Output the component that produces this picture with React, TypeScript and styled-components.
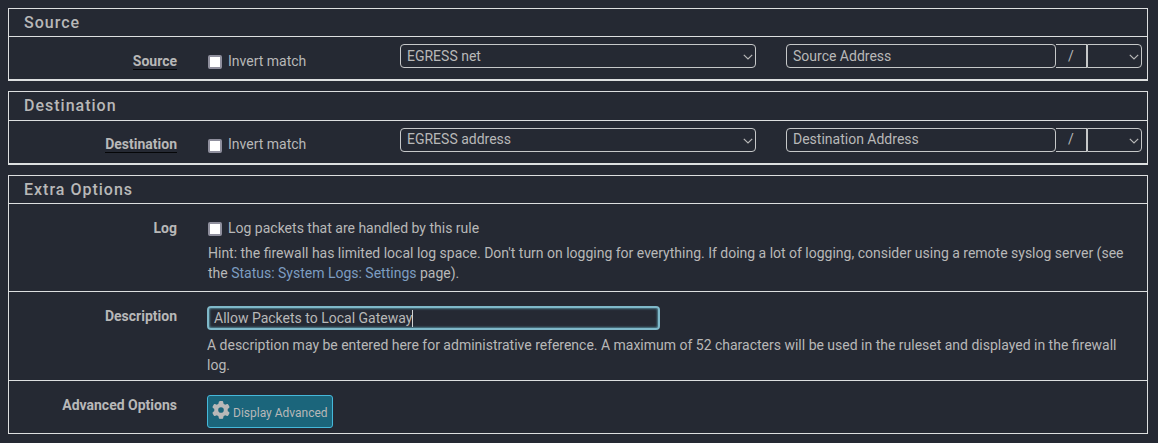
import React from 'react';
import styled, { createGlobalStyle } from 'styled-components';
import { FaGear } from 'react-icons/fa6';

const line = '#dddfe0';
const text = '#b8b8b8';

const GlobalStyle = createGlobalStyle`
  * { box-sizing: border-box; }
  body {
    margin: 0;
    background: #252933;
    color: ${text};
    font: 14px/20px Roboto, sans-serif;
  }
  input, button { font: inherit; color: inherit; }
`;

const Page = styled.main`
  display: flex;
  flex-direction: column;
  gap: 10px;
  width: 1158px;
  height: 443px;
  padding: 8px 10px 9px 8px;
`;

const Panel = styled.section<{ $thick?: boolean }>`
  border: 1px solid ${line};
  border-bottom-width: ${(p) => (p.$thick ? 2 : 1)}px;
`;

const Title = styled.h2<{ $height?: number }>`
  height: ${(p) => p.$height ?? 27}px;
  margin: 0;
  padding-left: 15px;
  font-size: 16px;
  font-weight: 500;
  line-height: 27px;
  letter-spacing: 1px;
`;

const Row = styled.div<{ $height: number }>`
  display: flex;
  align-items: flex-start;
  height: ${(p) => p.$height}px;
  border-top: 1px solid ${line};
`;

const Label = styled.div<{ $top: number }>`
  width: 168px;
  margin-right: 30px;
  padding-top: ${(p) => p.$top}px;
  text-align: right;
  font-weight: 700;
`;

const Underlined = styled.span`
  display: inline-block;
  height: 19px;
  border-bottom: 1px solid #050608;
`;

const CheckLabel = styled.label<{ $top: number; $width?: number }>`
  display: flex;
  width: ${(p) => (p.$width ? `${p.$width}px` : 'auto')};
  padding: ${(p) => p.$top}px 0 0 1px;
  gap: 6px;
`;

const Checkbox = styled.input<{ $top: number }>`
  appearance: none;
  width: 14px;
  height: 14px;
  margin: ${(p) => p.$top}px 0 0;
  border: 2px solid #8f8f9d;
  border-radius: 2px;
  background: #fff;
`;

const Select = styled.div<{ $width: number; $shift: number; $joined?: boolean }>`
  display: flex;
  justify-content: space-between;
  width: ${(p) => p.$width}px;
  height: 24px;
  padding: 0 2px 0 6px;
  border: 1px solid #c6c8c9;
  border-radius: ${(p) => (p.$joined ? '0 4px 4px 0' : '4px')};
  line-height: ${(p) => 22 + p.$shift}px;
`;

const Chevron = styled.svg`
  width: 10px;
  height: 8px;
  margin-top: 8px;
  fill: none;
  stroke: ${text};
  stroke-width: 1.2;
`;

const Controls = styled.div`
  display: flex;
  padding-top: 7px;
`;

const AddressGroup = styled.div`
  display: flex;
  margin-left: 30px;
`;

const Address = styled.input<{ $shift: number }>`
  width: 270px;
  height: 24px;
  padding: 0 6px ${(p) => p.$shift}px;
  border: 1px solid #c6c8c9;
  border-radius: 4px;
  background: transparent;
  outline: none;
  &::placeholder { color: ${text}; opacity: 1; }
`;

const Slash = styled.span<{ $shift: number }>`
  width: 31px;
  height: 24px;
  border: 1px solid #c6c8c9;
  border-left: 0;
  text-align: center;
  line-height: ${(p) => 22 + p.$shift}px;
`;

const Body = styled.div`
  flex: 1;
`;

const Help = styled.p<{ $top: number; $left?: number }>`
  width: 930px;
  margin: ${(p) => p.$top}px 0 0 ${(p) => p.$left ?? 0}px;
  word-spacing: -0.03px;
`;

const Link = styled.a`
  color: #7d9dc1;
`;

const DescriptionField = styled.div`
  display: flex;
  align-items: center;
  width: 453px;
  height: 24px;
  margin-top: 14px;
  padding-left: 5px;
  border: 2px solid #7fb8c9;
  border-radius: 4px;
  box-shadow: inset 0 0 2px 1px #4f7f8e;
`;

const Caret = styled.span`
  width: 1px;
  height: 17px;
  background: #d0d2d3;
`;

const AdvancedButton = styled.button`
  display: flex;
  width: 126px;
  height: 33px;
  margin-top: 14px;
  padding: 0 0 0 4px;
  gap: 3px;
  border: 1px solid #46b8da;
  border-radius: 3px;
  background: #1b657b;
  font-size: 12px;
  line-height: 34px;
  white-space: nowrap;
`;

const Gear = styled(FaGear)`
  width: 18px;
  height: 18px;
  margin-top: 5px;
  flex: none;
`;

function Arrow() {
  return (
    <Chevron viewBox="0 0 10 8">
      <path d="M0.8 1.8 L5 6 L9.2 1.8" />
    </Chevron>
  );
}

interface EndpointProps {
  name: string;
  network: string;
  titleHeight: number;
  labelTop: number;
  checkTop: number;
  shift: number;
}

function Endpoint({ name, network, titleHeight, labelTop, checkTop, shift }: EndpointProps) {
  return (
    <Panel $thick>
      <Title $height={titleHeight}>{name}</Title>
      <Row $height={43}>
        <Label $top={labelTop}><Underlined>{name}</Underlined></Label>
        <CheckLabel $top={labelTop} $width={193}>
          <Checkbox type="checkbox" $top={checkTop} />
          Invert match
        </CheckLabel>
        <Controls>
          <Select $width={356} $shift={shift}>{network}<Arrow /></Select>
          <AddressGroup>
            <Address placeholder={`${name} Address`} $shift={-shift} />
            <Slash $shift={shift}>/</Slash>
            <Select $width={55} $shift={shift} $joined><span /><Arrow /></Select>
          </AddressGroup>
        </Controls>
      </Row>
    </Panel>
  );
}

export default function App() {
  return (
    <Page>
      <GlobalStyle />
      <Endpoint name="Source" network="EGRESS net" titleHeight={27} labelTop={14} checkTop={4} shift={0} />
      <Endpoint name="Destination" network="EGRESS address" titleHeight={28} labelTop={13} checkTop={5} shift={-2} />
      <Panel>
        <Title>Extra Options</Title>
        <Row $height={88}>
          <Label $top={14}>Log</Label>
          <Body>
            <CheckLabel $top={14}>
              <Checkbox type="checkbox" $top={4} />
              Log packets that are handled by this rule
            </CheckLabel>
            <Help $top={5} $left={1}>
              Hint: the firewall has limited local log space. Don't turn on logging for everything. If doing a lot of logging, consider using a remote syslog server (see the <Link>Status: System Logs: Settings</Link> page).
            </Help>
          </Body>
        </Row>
        <Row $height={89}>
          <Label $top={14}>Description</Label>
          <Body>
            <DescriptionField>Allow Packets to Local Gateway<Caret /></DescriptionField>
            <Help $top={5}>
              A description may be entered here for administrative reference. A maximum of 52 characters will be used in the ruleset and displayed in the firewall log.
            </Help>
          </Body>
        </Row>
        <Row $height={53}>
          <Label $top={14}>Advanced Options</Label>
          <AdvancedButton><Gear />Display Advanced</AdvancedButton>
        </Row>
      </Panel>
    </Page>
  );
}
